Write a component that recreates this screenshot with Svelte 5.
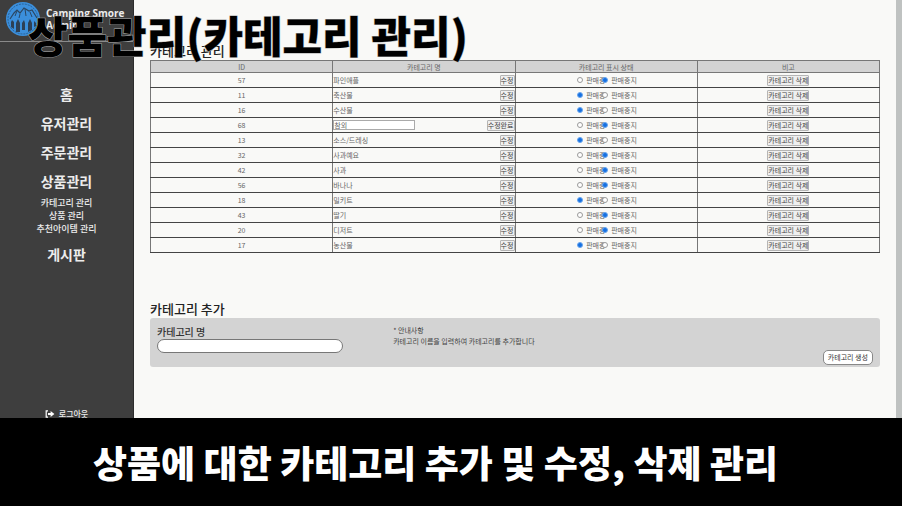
<script>
  const menu = [
    { label: '홈' },
    { label: '유저관리' },
    { label: '주문관리' },
    { label: '상품관리', children: ['카테고리 관리', '상품 관리', '추천아이템 관리'] },
    { label: '게시판' }
  ];

  let rows = $state([
    { id: 57, name: '파인애플', status: 'stop' },
    { id: 11, name: '축산물', status: 'sale' },
    { id: 16, name: '수산물', status: 'sale' },
    { id: 68, name: '참외', status: 'stop', editing: true },
    { id: 13, name: '소스/드레싱', status: 'sale' },
    { id: 32, name: '사과예요', status: 'stop' },
    { id: 42, name: '사과', status: 'stop' },
    { id: 56, name: '바나나', status: 'stop' },
    { id: 18, name: '밀키트', status: 'sale' },
    { id: 43, name: '딸기', status: 'stop' },
    { id: 20, name: '디저트', status: 'stop' },
    { id: 17, name: '농산물', status: 'sale' }
  ]);
  let newName = $state('');
</script>

<div class="screen">
  <div class="app">
    <aside>
      <a class="brand" href="#home">
        <svg class="logo" viewBox="0 0 36 36" aria-hidden="true">
          <circle cx="18" cy="18" r="17" fill="#3b8fdc" />
          <circle cx="18" cy="18" r="15" fill="none" stroke="#2a5f91" stroke-width="1" stroke-dasharray="2 1" />
          <path d="M5 18 L9 12 L12 9 L15 12 L19 7 L24 10 L27 9 L32 17" fill="none" stroke="#2b4763" stroke-width="1.2" />
          <path d="M12 10 L10 15 M15 13 L14 17 M20 8 L21 15 M25 11 L27 16" fill="none" stroke="#2b4763" stroke-width="1" />
          <path d="M6 26 V21 L7 19 L9 21 V28 Z M11 31 V22 L13 18 L15 22 V31 Z M17 29 V22 L19 19 L20 22 V29 Z M23 31 V22 L25 18 L27 22 V29 Z M29 26 V20 L31 22 V25 Z" fill="#2d4055" />
        </svg>
        <span>Camping Smore<br />Admin</span>
      </a>
      <nav>
        {#each menu as item}
          <a class="main-link" href="#menu">{item.label}</a>
          {#if item.children}
            <div class="sub">
              {#each item.children as child}
                <a href="#sub">{child}</a>
              {/each}
            </div>
          {/if}
        {/each}
      </nav>
      <button class="logout" type="button">
        <svg viewBox="0 0 10 8" aria-hidden="true">
          <path d="M3 .8 H1.2 V7.2 H3" fill="none" stroke="#fff" stroke-width="1.2" />
          <path d="M3 3 H5.6 V1 L9.4 4 L5.6 7 V5 H3 Z" fill="#fff" />
        </svg>
        로그아웃
      </button>
    </aside>

    <main>
      <h2>카테고리 관리</h2>
      <table>
        <thead>
          <tr><th>ID</th><th>카테고리 명</th><th>카테고리 표시 상태</th><th>비고</th></tr>
        </thead>
        <tbody>
          {#each rows as row (row.id)}
            <tr>
              <td>{row.id}</td>
              <td>
                <div class="name">
                  {#if row.editing}
                    <input type="text" aria-label="카테고리 명" bind:value={row.name} />
                    <button type="button">수정완료</button>
                  {:else}
                    <span>{row.name}</span>
                    <button type="button">수정</button>
                  {/if}
                </div>
              </td>
              <td>
                <div class="status">
                  <label><input type="radio" name="s{row.id}" value="sale" bind:group={row.status} />판매중</label>
                  <label><input type="radio" name="s{row.id}" value="stop" bind:group={row.status} />판매중지</label>
                </div>
              </td>
              <td><button class="remove" type="button">카테고리 삭제</button></td>
            </tr>
          {/each}
        </tbody>
      </table>

      <h2 class="add-title">카테고리 추가</h2>
      <form class="panel" onsubmit={(e) => e.preventDefault()}>
        <div class="field">
          <label for="new-name">카테고리 명</label>
          <input id="new-name" type="text" bind:value={newName} />
        </div>
        <p>* 안내사항<br />카테고리 이름을 입력하여 카테고리를 추가합니다</p>
        <button type="submit">카테고리 생성</button>
      </form>
    </main>
    <div class="scrollbar"></div>
  </div>

  <footer>상품에 대한 카테고리 추가 및 수정, 삭제 관리</footer>
  <h1>상품관리(카테고리 관리)</h1>
</div>

<style>
  .screen {
    position: relative;
    display: flex;
    flex-direction: column;
    height: 100vh;
    overflow: hidden;
    background: #f9f9f7;
    color: #333;
    font-family: 'Noto Sans CJK KR', sans-serif;
  }
  .screen * {
    box-sizing: border-box;
  }
  a {
    color: inherit;
    text-decoration: none;
  }
  button,
  input {
    margin: 0;
    font: inherit;
    color: inherit;
  }
  .app {
    display: flex;
    flex: 1;
    min-height: 0;
  }
  aside {
    display: flex;
    flex-direction: column;
    flex: 0 0 134px;
    overflow: hidden;
    background: #3e3e3e;
    border-right: 1px solid #2c2c2c;
    color: #ececec;
  }
  .brand {
    display: flex;
    gap: 5px;
    height: 42px;
    padding: 1px 0 0 5px;
    border-bottom: 1px solid #8a8a8a;
    font: 700 10px/12px 'Open Sans', sans-serif;
    white-space: nowrap;
  }
  .brand span {
    padding-top: 6px;
  }
  .logo {
    flex: none;
    width: 36px;
    height: 36px;
  }
  nav {
    display: flex;
    flex-direction: column;
    align-items: center;
    padding-top: 38px;
    text-align: center;
  }
  .main-link {
    font-size: 14px;
    font-weight: 700;
    line-height: 29px;
  }
  .sub {
    display: flex;
    flex-direction: column;
    margin-bottom: 5px;
    font-size: 9px;
    font-weight: 500;
    line-height: 13px;
  }
  .logout {
    display: flex;
    align-items: center;
    justify-content: center;
    gap: 4px;
    margin-top: auto;
    padding: 0;
    border: 0;
    background: none;
    font-size: 8px;
    font-weight: 500;
    line-height: 8px;
  }
  .logout svg {
    width: 10px;
    height: 8px;
  }
  main {
    flex: 1;
    min-width: 0;
    padding: 42px 16px 0;
  }
  h2 {
    margin: 0;
    font-size: 13px;
    font-weight: 500;
    line-height: 18px;
    color: #222;
  }
  table {
    width: 100%;
    table-layout: fixed;
    border-collapse: collapse;
    border: 1px solid #8c8c8c;
    font-size: 7px;
    line-height: 10px;
    text-align: center;
    color: #666;
  }
  th,
  td {
    padding: 0;
    border: 1px solid #777;
    font-weight: 400;
  }
  th {
    height: 12px;
    background: #d3d3d3;
  }
  td {
    height: 15px;
    border-top-color: #444;
    border-bottom-color: #444;
  }
  td button {
    display: block;
    padding: 0;
    border: 1px solid #b5b5b5;
    border-radius: 1px;
    background: #efefef;
    line-height: 9px;
    color: #444;
  }
  .remove {
    margin: 0 auto;
  }
  .name {
    display: flex;
    align-items: center;
    justify-content: space-between;
  }
  .name input {
    width: 82px;
    height: 10px;
    padding: 0;
    border: 1px solid #aaa;
    background: #fff;
  }
  .status {
    display: flex;
    justify-content: center;
  }
  .status label {
    display: flex;
    align-items: center;
    gap: 3px;
    width: 25px;
    white-space: nowrap;
  }
  .status label + label {
    width: 33px;
  }
  .status input {
    position: relative;
    flex: none;
    appearance: none;
    width: 6px;
    height: 6px;
    border: 1px solid #9a9a9a;
    border-radius: 50%;
    background: #fff;
  }
  .status input:checked {
    border-color: #6aa6ee;
    background: #1670e0;
  }
  .add-title {
    margin-top: 47px;
  }
  .panel {
    display: flex;
    height: 49px;
    padding: 7px;
    border-radius: 3px;
    background: #d3d3d3;
  }
  .field {
    display: flex;
    flex-direction: column;
    flex: 0 0 26%;
    font-size: 10px;
    font-weight: 500;
    line-height: 14px;
  }
  .field input {
    width: 100%;
    height: 14px;
    padding: 0 6px;
    border: 1px solid #777;
    border-radius: 7px;
    background: #fff;
    font-size: 8px;
  }
  .panel p {
    flex: 1;
    margin: 0 0 0 50px;
    font-size: 7px;
    line-height: 11px;
    color: #444;
  }
  .panel button {
    align-self: flex-end;
    height: 15px;
    margin-bottom: -5px;
    padding: 0 4px;
    border: 1px solid #888;
    border-radius: 5px;
    background: #fff;
    font-size: 7px;
    line-height: 11px;
  }
  .scrollbar {
    flex: 0 0 6px;
    background: #bfc2c1;
  }
  footer {
    flex: 0 0 88px;
    padding-left: 93px;
    background: #000;
    color: #fff;
    font-size: 37px;
    font-weight: 900;
    line-height: 88px;
    white-space: nowrap;
  }
  h1 {
    position: absolute;
    top: 6px;
    left: 28px;
    margin: 0;
    color: #000;
    font-size: 43px;
    font-weight: 900;
    line-height: 56px;
    white-space: nowrap;
    -webkit-text-stroke: 1px #aaa;
    paint-order: stroke fill;
  }
</style>
